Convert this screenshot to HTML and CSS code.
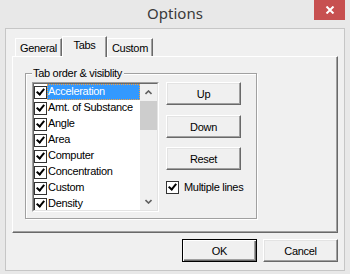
FILE: index.html
```html
<!DOCTYPE html>
<html>
<head>
<meta charset="utf-8">
<link rel="stylesheet" href="styles.css">
</head>
<body>
<div class="window">
  <div class="titlebar">
    <span></span>
    <div class="title">Options</div>
    <div class="close">
      <svg width="10" height="8" viewBox="0 0 10 8"><path d="M1.5 0.5 L8.5 7.5 M8.5 0.5 L1.5 7.5" stroke="#fff" stroke-width="2" fill="none"/></svg>
    </div>
  </div>
  <div class="client">
    <div class="tabs">
      <div class="tab tab-general">General</div>
      <div class="tab tab-active">Tabs</div>
      <div class="tab tab-custom">Custom</div>
    </div>
    <div class="panel">
      <div class="group">
        <div class="group-label">Tab order &amp; visiblity</div>
        <div class="listbox">
          <div class="listbox-inner">
            <ul class="items">
              <li class="item selected"><span class="cb"></span><span class="label">Acceleration</span></li>
              <li class="item"><span class="cb"></span><span class="label">Amt. of Substance</span></li>
              <li class="item"><span class="cb"></span><span class="label">Angle</span></li>
              <li class="item"><span class="cb"></span><span class="label">Area</span></li>
              <li class="item"><span class="cb"></span><span class="label">Computer</span></li>
              <li class="item"><span class="cb"></span><span class="label">Concentration</span></li>
              <li class="item"><span class="cb"></span><span class="label">Custom</span></li>
              <li class="item"><span class="cb"></span><span class="label">Density</span></li>
            </ul>
            <div class="scrollbar">
              <div class="arrow">
                <svg width="7" height="5" viewBox="0 0 7 5"><path d="M0.5 4 L3.5 1 L6.5 4" stroke="#606060" stroke-width="1.6" fill="none"/></svg>
              </div>
              <div class="track"><div class="thumb"></div></div>
              <div class="arrow">
                <svg width="7" height="5" viewBox="0 0 7 5"><path d="M0.5 1 L3.5 4 L6.5 1" stroke="#606060" stroke-width="1.6" fill="none"/></svg>
              </div>
            </div>
          </div>
        </div>
        <div class="side">
          <button class="btn">Up</button>
          <button class="btn">Down</button>
          <button class="btn">Reset</button>
          <label class="check"><span class="cb"></span><span>Multiple lines</span></label>
        </div>
      </div>
    </div>
    <div class="footer">
      <button class="btn btn-default">OK</button>
      <button class="btn">Cancel</button>
    </div>
  </div>
</div>
</body>
</html>
```

FILE: styles.css
```css
html, body {
  margin: 0;
  padding: 0;
}
body {
  width: 350px;
  height: 274px;
  overflow: hidden;
  background: #e8e8e8;
  font-family: "Liberation Sans", Arial, sans-serif;
  font-size: 11px;
  letter-spacing: -0.3px;
  color: #000;
}
.window {
  height: 274px;
  box-sizing: border-box;
  padding: 0 5px 3px;
  display: flex;
  flex-direction: column;
}
.titlebar {
  height: 28px;
  flex: none;
  display: grid;
  grid-template-columns: 1fr auto 1fr;
}
.title {
  font-family: "Noto Sans", "Open Sans", sans-serif;
  font-size: 15px;
  letter-spacing: 0;
  color: #3a3a3a;
  line-height: 26px;
}
.close {
  justify-self: end;
  width: 31px;
  height: 20px;
  background: #c75050;
  display: flex;
  align-items: center;
  justify-content: center;
}
.client {
  flex: 1;
  border: 1px solid #c6c6c6;
  background: #f0f0f0;
  padding: 7px 6px 0 6px;
  display: flex;
  flex-direction: column;
}
.tabs {
  height: 20px;
  display: flex;
  align-items: flex-end;
  padding-left: 3px;
}
.tab {
  box-sizing: border-box;
  height: 18px;
  border-top: 1px solid #fff;
  border-left: 1px solid #fff;
  border-right: 1px solid #696969;
  box-shadow: inset -1px 0 0 #a0a0a0;
  background: #f0f0f0;
  text-align: center;
  line-height: 17px;
  padding-top: 1px;
}
.tab-general { width: 47px; }
.tab-active {
  width: 45px;
  height: 21px;
  margin-bottom: -1px;
  position: relative;
  z-index: 1;
  line-height: 16px;
  padding-top: 0;
}
.tab-custom { width: 46px; }
.panel {
  height: 177px;
  box-sizing: border-box;
  border-top: 1px solid #fff;
  border-left: 1px solid #fff;
  border-right: 1px solid #696969;
  border-bottom: 1px solid #696969;
  box-shadow: inset -1px -1px 0 #a0a0a0;
  padding: 16px 0 0 12px;
}
.group {
  position: relative;
  width: 232px;
  height: 146px;
  box-sizing: border-box;
  border: 1px solid #a0a0a0;
  box-shadow: inset 1px 1px 0 #fff, 1px 1px 0 #fff;
  padding: 8px 0 0 6px;
  display: flex;
  align-items: flex-start;
  gap: 7px;
}
.group-label {
  position: absolute;
  left: 6px;
  top: -7px;
  padding: 0 2px 0 1px;
  background: #f0f0f0;
  line-height: 13px;
}
.listbox {
  width: 127px;
  height: 130px;
  box-sizing: border-box;
  border: 1px solid;
  border-color: #a0a0a0 #fff #fff #a0a0a0;
}
.listbox-inner {
  height: 100%;
  box-sizing: border-box;
  border: 1px solid;
  border-color: #696969 #e3e3e3 #e3e3e3 #696969;
  background: #fff;
  display: flex;
  overflow: hidden;
}
.items {
  list-style: none;
  margin: 0;
  padding: 0;
  flex: 1;
  overflow: hidden;
}
.item {
  height: 16px;
  display: flex;
  align-items: center;
}
.item .label {
  flex: 1;
  height: 16px;
  box-sizing: border-box;
  line-height: 15px;
  padding-left: 1px;
}
.item.selected .label {
  background: #3399ff;
  color: #fff;
  outline: 1px dotted #f5a040;
  outline-offset: -1px;
}
.cb {
  flex: none;
  position: relative;
  width: 13px;
  height: 13px;
  box-sizing: border-box;
  border: 1px solid #333;
  background: #fff;
}
.cb::after {
  content: "";
  position: absolute;
  left: 3px;
  top: 0px;
  width: 3px;
  height: 6px;
  border-right: 2px solid #000;
  border-bottom: 2px solid #000;
  transform: rotate(40deg);
}
.scrollbar {
  width: 17px;
  flex: none;
  background: #f0f0f0;
  display: flex;
  flex-direction: column;
}
.arrow {
  height: 17px;
  display: flex;
  align-items: center;
  justify-content: center;
}
.track {
  flex: 1;
}
.thumb {
  height: 29px;
  background: #cdcdcd;
}
.side {
  display: flex;
  flex-direction: column;
  align-items: flex-start;
}
.btn {
  width: 75px;
  height: 23px;
  margin: 0;
  padding: 0;
  box-sizing: border-box;
  font: inherit;
  letter-spacing: inherit;
  color: #000;
  background: #f0f0f0;
  border: 1px solid;
  border-color: #fff #696969 #696969 #fff;
  box-shadow: inset -1px -1px 0 #a0a0a0, inset 1px 1px 0 #e3e3e3;
}
.side .btn + .btn {
  margin-top: 10px;
}
.side .btn:nth-child(3) {
  margin-top: 9px;
}
.btn-default {
  border: 1px solid #000;
  box-shadow: inset 1px 1px 0 #fff, inset -1px -1px 0 #696969, inset -2px -2px 0 #a0a0a0;
}
.check {
  margin-top: 11px;
  display: flex;
  align-items: center;
  gap: 5px;
  line-height: 13px;
}
.footer {
  display: flex;
  justify-content: flex-end;
  gap: 6px;
  margin-top: 6px;
}
```
